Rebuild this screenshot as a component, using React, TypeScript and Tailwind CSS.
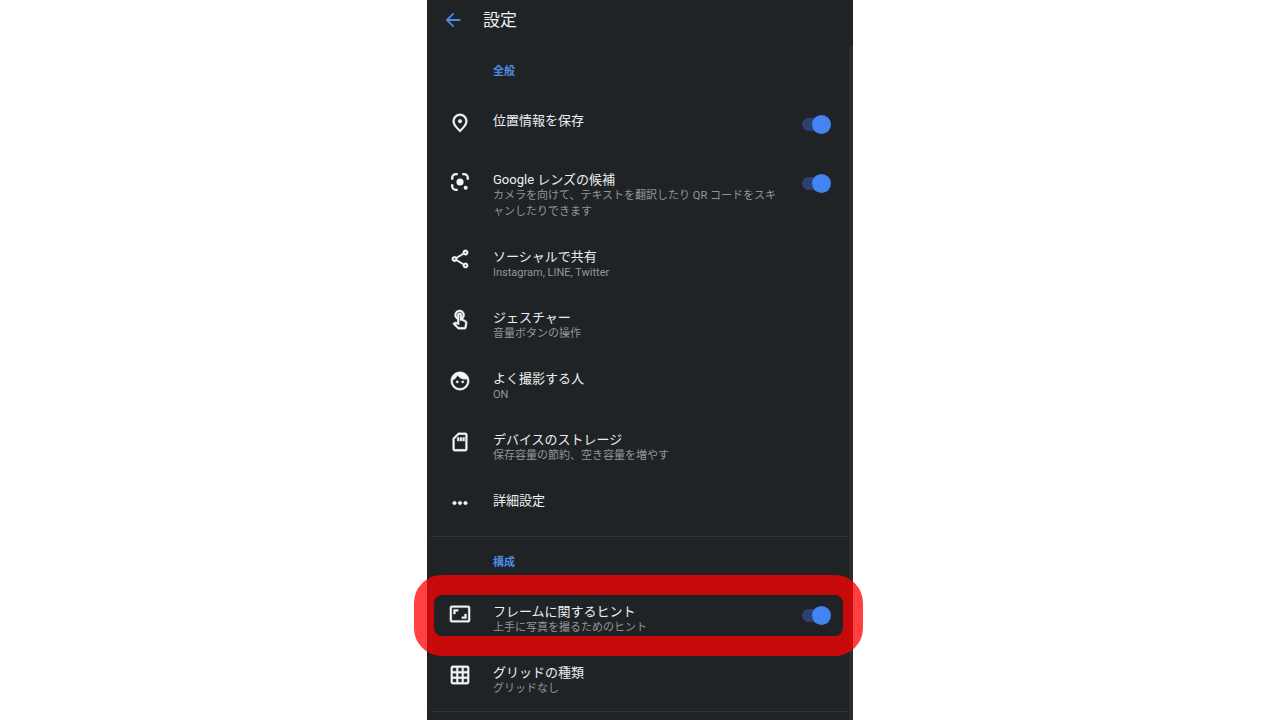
import { useId } from "react";
import type { ReactNode } from "react";
import {
  MdArrowBack,
  MdFace,
  MdGridOn,
  MdMoreHoriz,
  MdOutlineAspectRatio,
  MdOutlinePlace,
  MdOutlineSdCard,
  MdOutlineShare,
  MdOutlineTouchApp,
} from "react-icons/md";

interface SettingItemProps {
  icon: ReactNode;
  title: string;
  description?: string;
  toggle?: boolean;
  highlighted?: boolean;
}

function LensIcon() {
  return (
    <svg viewBox="0 0 24 24" className="size-full" aria-hidden="true">
      <g fill="none" stroke="currentColor" strokeWidth="2.5">
        <path fill="none" d="M3.5 9.5v-2a4 4 0 0 1 4-4h2" />
        <path fill="none" d="M14.5 3.5h2a4 4 0 0 1 4 4v2" />
        <path fill="none" d="M3.5 14.5v2a4 4 0 0 0 4 4h2" />
      </g>
      <circle cx="12" cy="12" r="3.9" fill="currentColor" />
      <circle cx="18.2" cy="18.2" r="2.2" fill="currentColor" />
    </svg>
  );
}

function SettingItem({ icon, title, description, toggle, highlighted }: SettingItemProps) {
  const id = useId();

  const text = (
    <>
      <span className="block text-[13px] text-[#eceef0]">{title}</span>
      {description && (
        <span className="block text-[11px] text-[#92969a]">{description}</span>
      )}
    </>
  );

  return (
    <li className="relative flex min-h-[59px] items-start gap-[22px] px-[18px] pt-[15px] pb-[14px] leading-4">
      <span className="-mt-px size-[22px] shrink-0 text-[22px] text-[#f4f5f6] [&_path:not([fill=none])]:stroke-[0.4]">
        {icon}
      </span>
      {toggle ? (
        <div className="flex min-w-0 flex-1 items-start gap-5">
          <label htmlFor={id} className="min-w-0 flex-1">
            {text}
          </label>
          <input
            id={id}
            type="checkbox"
            role="switch"
            defaultChecked
            className="relative mt-0.5 h-5 w-[29px] shrink-0 appearance-none before:absolute before:top-[3px] before:left-0 before:h-[13px] before:w-6 before:rounded-full before:bg-[#5f6368] after:absolute after:top-0 after:left-0 after:size-[19px] after:rounded-full after:bg-[#bdc1c6] checked:before:bg-[#2b426f] checked:after:left-[10px] checked:after:bg-[#4484f2]"
          />
        </div>
      ) : (
        <button type="button" className="min-w-0 flex-1 text-left">
          {text}
        </button>
      )}
      {highlighted && (
        <span className="pointer-events-none absolute -top-[14px] -right-[14px] -bottom-[6px] -left-[17px] z-10 rounded-[28px] border-20 border-[#ff0000]/75" />
      )}
    </li>
  );
}

function SectionTitle({ children }: { children: ReactNode }) {
  return (
    <h2 className="py-[18px] pl-[62px] text-[11px] leading-4 font-bold text-[#4a8de0]">
      {children}
    </h2>
  );
}

export default function App() {
  return (
    <div className="h-screen overflow-hidden bg-white">
      <div
        lang="ja"
        className="mx-auto flex min-h-screen w-full max-w-[426px] flex-col bg-[#202326] font-['Roboto','Noto_Sans_CJK_JP',sans-serif]"
      >
        <header className="mb-[6px] flex h-10 items-center gap-[19px] pl-[15px]">
          <button type="button" aria-label="戻る" className="text-[22px] text-[#4a8de0]">
            <MdArrowBack />
          </button>
          <h1 className="pt-0.5 text-[17px] text-[#eceef0]">設定</h1>
        </header>

        <main className="flex-1 border-r-4 border-l-4 border-r-[#2a2d2f] border-l-[#202326]">
          <section>
            <SectionTitle>全般</SectionTitle>
            <ul>
              <SettingItem icon={<MdOutlinePlace />} title="位置情報を保存" toggle />
              <SettingItem
                icon={<LensIcon />}
                title="Google レンズの候補"
                description="カメラを向けて、テキストを翻訳したり QR コードをスキャンしたりできます"
                toggle
              />
              <SettingItem
                icon={<MdOutlineShare />}
                title="ソーシャルで共有"
                description="Instagram, LINE, Twitter"
              />
              <SettingItem
                icon={<MdOutlineTouchApp />}
                title="ジェスチャー"
                description="音量ボタンの操作"
              />
              <SettingItem icon={<MdFace />} title="よく撮影する人" description="ON" />
              <SettingItem
                icon={<MdOutlineSdCard />}
                title="デバイスのストレージ"
                description="保存容量の節約、空き容量を増やす"
              />
              <SettingItem icon={<MdMoreHoriz />} title="詳細設定" />
            </ul>
          </section>

          <section className="-mt-px border-y border-[#303336]">
            <SectionTitle>構成</SectionTitle>
            <ul>
              <SettingItem
                icon={<MdOutlineAspectRatio />}
                title="フレームに関するヒント"
                description="上手に写真を撮るためのヒント"
                toggle
                highlighted
              />
              <SettingItem
                icon={<MdGridOn />}
                title="グリッドの種類"
                description="グリッドなし"
              />
            </ul>
          </section>
        </main>
      </div>
    </div>
  );
}
